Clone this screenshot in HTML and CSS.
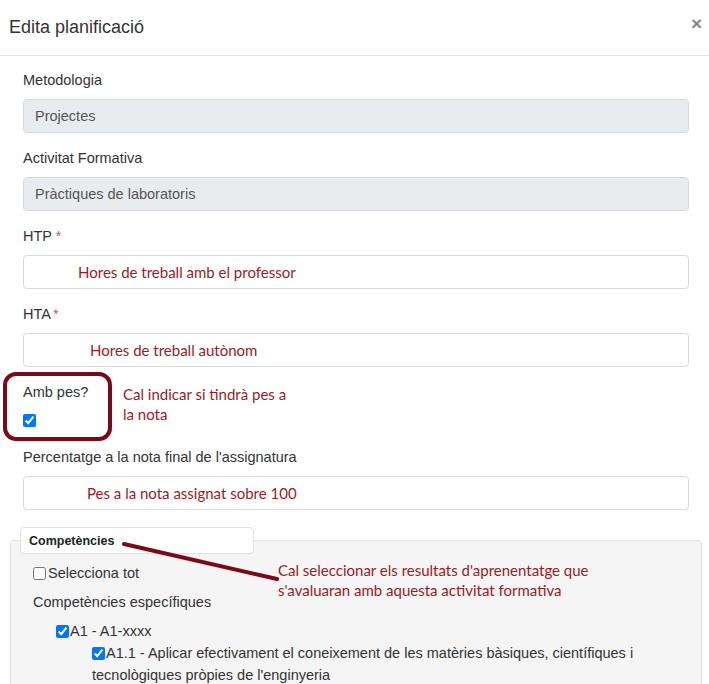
FILE: index.html
```html
<!DOCTYPE html>
<html lang="ca">
<head>
<meta charset="utf-8">
<title>Edita planificació</title>
<link rel="stylesheet" href="styles.css">
</head>
<body>
<div class="modal">
  <div class="modal-header">
    <h4 class="modal-title">Edita planificació</h4>
    <span class="close">&times;</span>
  </div>
  <div class="modal-body">
    <div class="form-group">
      <label class="lbl">Metodologia</label>
      <div class="input disabled">Projectes</div>
    </div>
    <div class="form-group">
      <label class="lbl">Activitat Formativa</label>
      <div class="input disabled">Pràctiques de laboratoris</div>
    </div>
    <div class="form-group">
      <label class="lbl">HTP <span class="req">*</span></label>
      <div class="input"><span class="note note-htp">Hores de treball amb el professor</span></div>
    </div>
    <div class="form-group">
      <label class="lbl">HTA<span class="req thin">*</span></label>
      <div class="input"><span class="note note-hta">Hores de treball autònom</span></div>
    </div>
    <div class="form-group check-group">
      <label class="lbl">Amb pes?</label>
      <input type="checkbox" class="cb" checked>
    </div>
    <div class="form-group">
      <label class="lbl">Percentatge a la nota final de l'assignatura</label>
      <div class="input"><span class="note note-pes">Pes a la nota assignat sobre 100</span></div>
    </div>
    <div class="fieldset">
      <div class="legend">Competències</div>
      <div class="check-row sel-all"><input type="checkbox" class="cb">Selecciona tot</div>
      <div class="group-title">Competències específiques</div>
      <div class="check-row lvl1"><input type="checkbox" class="cb" checked>A1 - A1-xxxx</div>
      <div class="check-row lvl2"><input type="checkbox" class="cb" checked>A1.1 - Aplicar efectivament el coneixement de les matèries bàsiques, científiques i tecnològiques pròpies de l'enginyeria</div>
    </div>
  </div>

  <div class="annot-box"></div>
  <div class="annot annot-pes">Cal indicar si tindrà pes a<br>la nota</div>
  <div class="annot annot-comp">Cal seleccionar els resultats d'aprenentatge que<br>s'avaluaran amb aquesta activitat formativa</div>
  <svg class="annot-line" width="709" height="684" viewBox="0 0 709 684">
    <line x1="124" y1="544" x2="277" y2="579" stroke="#7a0a17" stroke-width="4" stroke-linecap="round"/>
  </svg>
</div>
</body>
</html>
```

FILE: styles.css
```css
* { box-sizing: border-box; }
html, body { margin: 0; padding: 0; background: #fff; }
body {
  font-family: "Liberation Sans", Arial, sans-serif;
  font-size: 14.5px;
  color: #333;
  overflow: hidden;
}
.modal {
  position: relative;
  width: 709px;
  height: 684px;
  overflow: hidden;
}
.modal-header {
  height: 56px;
  border-bottom: 1px solid #e5e5e5;
  display: flex;
  align-items: flex-start;
  justify-content: space-between;
  padding: 16px 7px 0 9px;
}
.modal-title {
  margin: 0;
  font-size: 18px;
  font-weight: normal;
  line-height: 22px;
  color: #333;
}
.close {
  font-size: 19px;
  font-weight: bold;
  color: #888;
  line-height: 18px;
  margin-top: -1px;
}
.modal-body {
  padding: 14px 20px 0 23px;
}
.form-group {
  margin-bottom: 15px;
}
.lbl {
  display: block;
  line-height: 20px;
  margin-bottom: 9px;
  color: #333;
}
.req { color: #d9534f; }
.thin { margin-left: 2px; }
.input {
  height: 34px;
  border: 1px solid #d6dade;
  border-radius: 4px;
  background: #fff;
  padding: 0 11px;
  color: #555;
  display: flex;
  align-items: center;
}
.input.disabled {
  background: #e9ecef;
  color: #555;
}
.note, .annot {
  font-family: Lato, "Open Sans", sans-serif;
  font-size: 15px;
  color: #9b1b1f;
}
.note-htp { margin-left: 43px; }
.note-hta { margin-left: 55px; }
.note-pes { margin-left: 52px; }
.check-group { margin-bottom: 20px; height: 45px; }
.check-group .lbl { margin-bottom: 12px; }
.cb {
  width: 13px;
  height: 13px;
  margin: 0;
  display: block;
}
.fieldset {
  margin: 30px -13px 0 -13px;
  background: #f5f5f5;
  border: 1px solid #e3e3e3;
  border-radius: 4px;
  padding: 0 9px 20px 9px;
  height: 200px;
}
.legend {
  width: 234px;
  height: 27px;
  margin-top: -14px;
  background: #fff;
  border: 1px solid #e3e3e3;
  border-radius: 4px;
  font-size: 12.5px;
  font-weight: bold;
  color: #222;
  padding: 0 8px;
  line-height: 26px;
}
.check-row {
  line-height: 22px;
}
.check-row .cb {
  display: inline-block;
  vertical-align: -2px;
  margin: 0 1px 0 0;
}
.sel-all { margin: 8px 0 0 13px; }
.sel-all .cb { margin-right: 2px; }
.group-title {
  margin: 7px 0 0 13px;
  line-height: 22px;
}
.lvl1 { margin: 7px 0 0 36px; }
.lvl2 { margin: 0 30px 0 72px; }

.annot-box {
  position: absolute;
  left: 3px;
  top: 372px;
  width: 109px;
  height: 69px;
  border: 4px solid #7a0a17;
  border-radius: 13px;
}
.annot {
  position: absolute;
  line-height: 20px;
}
.annot-pes { left: 123px; top: 384px; }
.annot-comp { left: 278px; top: 560px; }
.annot-line {
  position: absolute;
  left: 0;
  top: 0;
  pointer-events: none;
}
```
